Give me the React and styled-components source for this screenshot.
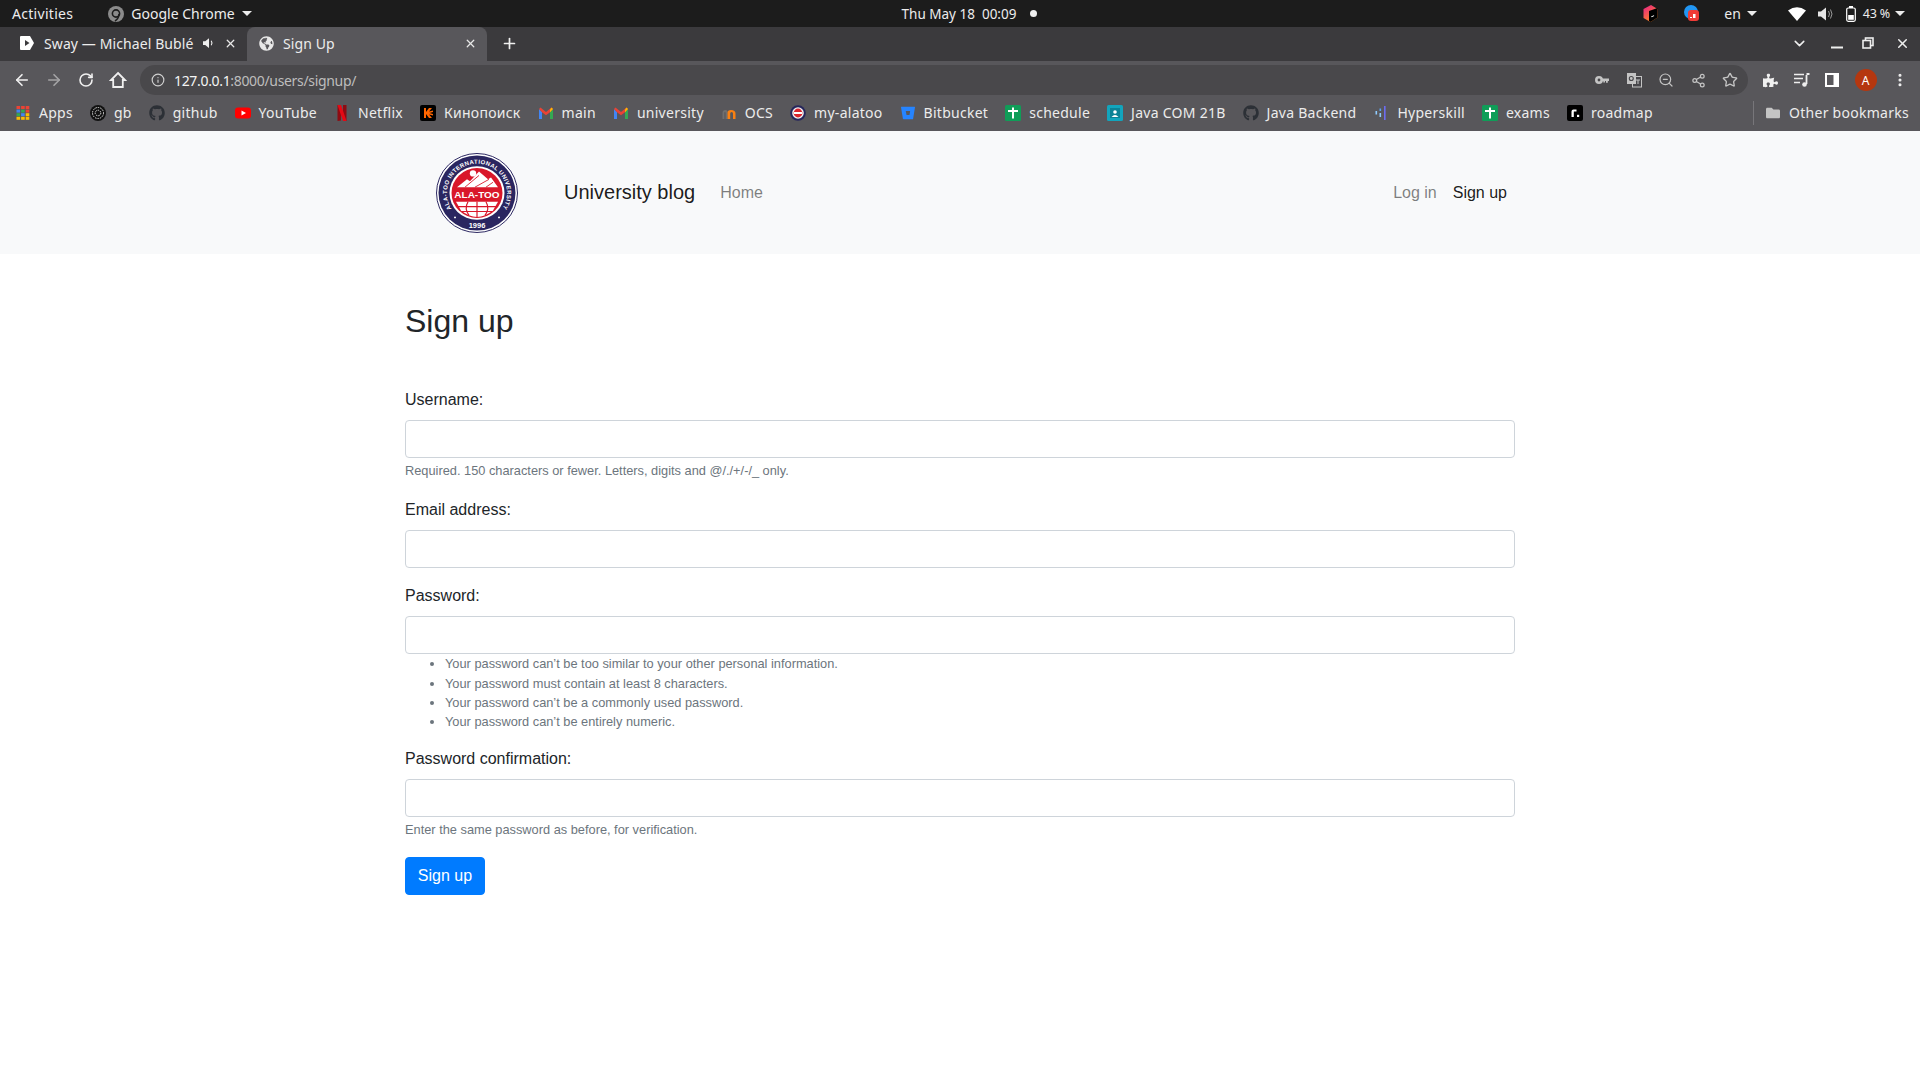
import React from "react";
import styled, { createGlobalStyle } from "styled-components";
import { ArrowLeft, ArrowRight, RotateCw, Info, ZoomOut, Share2, Star, X, Plus, ChevronDown, MoreVertical } from "lucide-react";
import { FaGithub, FaPuzzlePiece, FaFolder, FaGlobeAmericas } from "react-icons/fa";
import { SiBitbucket } from "react-icons/si";

const GlobalStyle = createGlobalStyle`
    * { box-sizing: border-box; }
    html, body { margin: 0; padding: 0; background: #fff; overflow: hidden; }
    body { font-family: "Liberation Sans", Arial, sans-serif; color: #212529; }
`;

const AppsIcon = () => {
    const colors = ["#ea4335", "#ea4335", "#ea4335", "#4285f4", "#34a853", "#ea4335", "#34a853", "#4285f4", "#fbbc04", "#fbbc04", "#fbbc04", "#fbbc04"];
    return (
        <svg width="16" height="16" viewBox="0 0 16 16">
            {colors.map((c, i) => (
                <rect key={i} x={1.5 + (i % 3) * 4.6} y={1 + Math.floor(i / 3) * 3.6} width="3.6" height="3" fill={c} />
            ))}
        </svg>
    );
};
const GbIcon = () => (
    <svg width="16" height="16" viewBox="0 0 16 16">
        <circle cx="8" cy="8" r="8" fill="#111" />
        <circle cx="8" cy="8" r="5.5" fill="none" stroke="#ddd" strokeWidth="1" strokeDasharray="1.5 1" />
        <circle cx="8" cy="8" r="2.8" fill="none" stroke="#ddd" strokeWidth="1" strokeDasharray="1.5 1" />
    </svg>
);
const YoutubeIcon = () => (
    <svg width="16" height="16" viewBox="0 0 16 16">
        <rect x="0" y="2.5" width="16" height="11" rx="3" fill="#f00" />
        <path d="M6.5 5.5 L11 8 L6.5 10.5 Z" fill="#fff" />
    </svg>
);
const NetflixIcon = () => (
    <svg width="16" height="16" viewBox="0 0 16 16">
        <path d="M3.5 0 H7 V15.5 L3.5 16 Z" fill="#8e0b12" />
        <path d="M9 0 H12.5 V16 L9 15.5 Z" fill="#8e0b12" />
        <path d="M3.5 0 H7 L12.5 16 H9 Z" fill="#e50914" />
    </svg>
);
const KinoIcon = () => (
    <svg width="16" height="16" viewBox="0 0 16 16">
        <rect width="16" height="16" rx="2" fill="#000" />
        <path d="M4 3 H6 V7 L9 3 H12 L9 6.5 L13 5.5 V7 L9.5 8 L13 9 V10.5 L9 9.5 L12 13 H9 L6 9 V13 H4 Z" fill="#f60" />
    </svg>
);
const GmailIcon = () => (
    <svg width="16" height="16" viewBox="0 0 16 16">
        <path d="M1 4 V14 H4 V7 Z" fill="#4285f4" />
        <path d="M15 4 V14 H12 V7 Z" fill="#34a853" />
        <path d="M1 4 L2.5 2.5 L8 7 L13.5 2.5 L15 4 L12 7.2 L8 10.2 L4 7.2 Z" fill="#ea4335" />
        <path d="M12 4.5 L13.5 2.5 L15 4 L12 7.2 Z" fill="#fbbc04" />
    </svg>
);
const MoodleIcon = () => (
    <svg width="16" height="16" viewBox="0 0 16 16">
        <path d="M1.5 14 V8 Q1.5 5 4.5 5 Q6.5 5 6.5 7 V14 H4.6 V8 Q4.6 7 3.8 7 Q3.4 7 3.4 8 V14 Z" fill="#6f6f6f" />
        <path d="M6.5 14 V7.5 Q6.5 5 10 5 Q14.5 5 14.5 8.5 V14 H12 V8.5 Q12 7 10.6 7 Q9.2 7 9.2 8.5 V14 Z" fill="#f98012" />
    </svg>
);
const AlatooSmallIcon = () => (
    <svg width="16" height="16" viewBox="0 0 16 16">
        <circle cx="8" cy="8" r="7.8" fill="#26265c" />
        <circle cx="8" cy="8" r="5.8" fill="#f2f2f2" />
        <circle cx="8" cy="8" r="4.4" fill="#d9232d" />
        <rect x="4" y="7" width="8" height="2" fill="#fff" />
    </svg>
);
const BitbucketIcon = () => <SiBitbucket size={14} color="#2684ff" />;
const SheetIcon = () => (
    <svg width="16" height="16" viewBox="0 0 16 16">
        <rect width="16" height="16" rx="1.5" fill="#0f9d58" />
        <rect x="3" y="5" width="10" height="2" fill="#fff" />
        <rect x="7" y="2.5" width="2" height="11" fill="#fff" />
    </svg>
);
const ClassroomIcon = () => (
    <svg width="16" height="16" viewBox="0 0 16 16">
        <rect width="16" height="16" rx="1.5" fill="#12a5bd" />
        <rect x="3" y="3" width="10" height="10" fill="#0c8296" />
        <circle cx="8" cy="7" r="1.8" fill="#fff" />
        <path d="M4.5 12 Q8 8 11.5 12 Z" fill="#fff" />
    </svg>
);
const HyperskillIcon = () => (
    <svg width="16" height="16" viewBox="0 0 16 16">
        <rect x="2.5" y="6" width="1.6" height="3.5" fill="#8ecbff" />
        <rect x="6.5" y="3.5" width="1.6" height="2.5" fill="#5aa5f5" />
        <rect x="6.5" y="8" width="1.6" height="4" fill="#8ecbff" />
        <rect x="11" y="1" width="1.6" height="14" fill="#6d6cf0" />
    </svg>
);
const RoadmapIcon = () => (
    <svg width="16" height="16" viewBox="0 0 16 16">
        <rect width="16" height="16" rx="2" fill="#000" />
        <path d="M4.5 12 V6.5 Q4.5 4.5 6.5 4.5 H9.5 V6.5 H7 Q6.8 6.5 6.8 7 V12 Z" fill="#fff" />
        <rect x="10" y="9.8" width="2.2" height="2.2" fill="#fff" />
    </svg>
);
const GithubIcon = () => <FaGithub size={16} color="#2c3036" />;

const bookmarks = [
    { name: "Apps", Icon: AppsIcon },
    { name: "gb", Icon: GbIcon },
    { name: "github", Icon: GithubIcon },
    { name: "YouTube", Icon: YoutubeIcon },
    { name: "Netflix", Icon: NetflixIcon },
    { name: "Кинопоиск", Icon: KinoIcon },
    { name: "main", Icon: GmailIcon },
    { name: "university", Icon: GmailIcon },
    { name: "OCS", Icon: MoodleIcon },
    { name: "my-alatoo", Icon: AlatooSmallIcon },
    { name: "Bitbucket", Icon: BitbucketIcon },
    { name: "schedule", Icon: SheetIcon },
    { name: "Java COM 21B", Icon: ClassroomIcon },
    { name: "Java Backend", Icon: GithubIcon },
    { name: "Hyperskill", Icon: HyperskillIcon },
    { name: "exams", Icon: SheetIcon },
    { name: "roadmap", Icon: RoadmapIcon },
];

const passwordRules = [
    "Your password can’t be too similar to your other personal information.",
    "Your password must contain at least 8 characters.",
    "Your password can’t be a commonly used password.",
    "Your password can’t be entirely numeric.",
];

const Logo = () => (
    <svg width="82" height="80" viewBox="0 0 82 82" preserveAspectRatio="none">
        <defs>
            <path id="logoArc" d="M15.6 57 A30 30 0 1 1 66.4 57" />
        </defs>
        <circle cx="41" cy="41" r="40.5" fill="#fff" stroke="#2a2660" strokeWidth="1" />
        <circle cx="41" cy="41" r="38.5" fill="#2a2660" />
        <circle cx="41" cy="41" r="27.5" fill="#fff" />
        <circle cx="41" cy="41" r="25.5" fill="#d9172a" />
        <text fontFamily="Liberation Sans" fontSize="6" fontWeight="700" fill="#fff" letterSpacing=".38">
            <textPath href="#logoArc">ALA-TOO INTERNATIONAL UNIVERSITY</textPath>
        </text>
        <text x="41" y="77" textAnchor="middle" fontFamily="Liberation Sans" fontSize="7.5" fontWeight="700" fill="#fff">1996</text>
        <circle cx="19" cy="66" r="1" fill="#fff" />
        <circle cx="63" cy="66" r="1" fill="#fff" />
        <circle cx="37" cy="21" r="3.2" fill="#fff" />
        <path d="M21 35 L31 27 L34 29 L43 19 L52 27 L55 25 L62 35 Z" fill="#fff" />
        <path d="M29 35 L43 23 M39 35 L53 27 M50 35 L57 30" stroke="#d9172a" strokeWidth="0.9" fill="none" />
        <text x="41" y="46" textAnchor="middle" fontFamily="Liberation Sans" fontSize="10" fontWeight="700" fill="#fff">ALA-TOO</text>
        <path d="M20 50 H62 L57 59 Q49 65.5 41 65.5 Q33 65.5 25 59 Z" fill="#fff" />
        <path d="M41 50 V66 M32 50 Q28 57 33 64 M50 50 Q54 57 49 64 M22 55 H60 M26 60 H56" stroke="#d9172a" strokeWidth="1.2" fill="none" />
    </svg>
);

const BrowserChrome = () => (
    <ChromeWrap>
        <SystemBar>
            <SystemLeft>
                <ActivitiesLabel>Activities</ActivitiesLabel>
                <AppMenu>
                    <svg width="16" height="16" viewBox="0 0 16 16">
                        <circle cx="8" cy="8" r="8" fill="#8b8b8b" />
                        <circle cx="8" cy="7.5" r="3.6" fill="none" stroke="#1c1c1c" strokeWidth="1.6" />
                        <path d="M11 8 Q10.5 13 7 15" stroke="#1c1c1c" strokeWidth="1.6" fill="none" />
                    </svg>
                    <span>Google Chrome</span>
                    <Caret />
                </AppMenu>
            </SystemLeft>
            <Clock>
                <span>Thu May 18&nbsp;&nbsp;00:09</span>
                <ClockDot />
            </Clock>
            <SystemRight>
                <svg width="15" height="17" viewBox="0 0 15 17">
                    <defs>
                        <linearGradient id="toolboxFill" x1="0" y1="0" x2="0.6" y2="1">
                            <stop offset="0" stopColor="#e91e8c" />
                            <stop offset="1" stopColor="#ff8a1e" />
                        </linearGradient>
                    </defs>
                    <path d="M0.5 4 L8 0 L14.5 4 V12.5 L7.5 17 L0.5 13 Z" fill="url(#toolboxFill)" />
                    <path d="M6 6 L14.5 3 V12.5 L7.5 17 L6 16 Z" fill="#000" />
                    <rect x="8" y="11" width="3" height="1" fill="#fff" transform="rotate(-25 9 11)" />
                </svg>
                <TrayBadge>
                    <svg width="15" height="17" viewBox="0 0 15 17">
                        <circle cx="7" cy="7" r="7" fill="#2196f3" />
                        <rect x="4" y="5" width="11" height="11" rx="3" fill="#ef3b36" />
                        <rect x="6" y="12" width="2" height="1" fill="#fff" />
                        <rect x="9" y="9" width="2.5" height="4" fill="#fff" />
                    </svg>
                </TrayBadge>
                <LangMenu>
                    <span>en</span>
                    <Caret />
                </LangMenu>
                <TrayIcons>
                    <svg width="18" height="14" viewBox="0 0 18 14">
                        <path d="M0 3.5 Q9 -3 18 3.5 L9 14 Z" fill="#fff" />
                    </svg>
                    <svg width="16" height="14" viewBox="0 0 16 14">
                        <path d="M0 4.5 H3 L8 0.5 V13.5 L3 9.5 H0 Z" fill="#e6e6e6" />
                        <path d="M10.5 4 Q12.5 7 10.5 10 M12.5 2.5 Q15.5 7 12.5 11.5" stroke="#999" fill="none" />
                    </svg>
                    <svg width="10" height="16" viewBox="0 0 10 16">
                        <rect x="0.7" y="2" width="8.6" height="13.3" rx="1.5" fill="none" stroke="#fff" strokeWidth="1.2" />
                        <rect x="3" y="0" width="4" height="2" fill="#fff" />
                        <rect x="2.2" y="9" width="5.6" height="4.8" fill="#fff" />
                    </svg>
                </TrayIcons>
                <BatteryText>
                    <span>43 %</span>
                    <Caret />
                </BatteryText>
            </SystemRight>
        </SystemBar>

        <TabStrip>
            <Tab $first>
                <svg width="16" height="16" viewBox="0 0 16 16">
                    <path d="M2 1 H11 L15 8 L11 15 H2 Q1 15 1 14 V2 Q1 1 2 1 Z" fill="#fff" />
                    <path d="M6 5 L10.5 8 L6 11 Z" fill="#3b3a3d" />
                </svg>
                <TabTitle>Sway — Michael Bublé</TabTitle>
                <svg width="12" height="12" viewBox="0 0 16 14">
                    <path d="M0 4.5 H3 L8 0.5 V13.5 L3 9.5 H0 Z" fill="#eee" />
                    <path d="M11 4 Q13 7 11 10" stroke="#eee" strokeWidth="1.5" fill="none" />
                </svg>
                <TabClose><X size={13} strokeWidth={2.4} /></TabClose>
            </Tab>
            <Tab $active>
                <FaGlobeAmericas size={15} color="#e8e8e8" />
                <TabTitle>Sign Up</TabTitle>
                <TabClose><X size={13} strokeWidth={2.4} /></TabClose>
            </Tab>
            <NewTab><Plus size={17} strokeWidth={2.4} /></NewTab>
            <WindowControls>
                <ChevronDown size={17} strokeWidth={2.2} />
                <WindowButtons>
                    <WindowSlot $w={30}>
                        <svg width="12" height="12" viewBox="0 0 12 12">
                            <rect x="0" y="9.5" width="12" height="2" fill="#eee" />
                        </svg>
                    </WindowSlot>
                    <WindowSlot $w={32}>
                        <svg width="12" height="12" viewBox="0 0 12 12">
                            <rect x="3.5" y="1" width="7.5" height="7.5" fill="none" stroke="#eee" strokeWidth="1.6" />
                            <rect x="1" y="3.5" width="7.5" height="7.5" fill="#3b3a3d" stroke="#eee" strokeWidth="1.6" />
                        </svg>
                    </WindowSlot>
                    <WindowSlot $w={36}><X size={15} strokeWidth={2.4} /></WindowSlot>
                </WindowButtons>
            </WindowControls>
        </TabStrip>

        <Toolbar>
            <NavButtons>
                <NavSlot><ArrowLeft size={18} strokeWidth={2.2} /></NavSlot>
                <NavSlot $dim><ArrowRight size={18} strokeWidth={2.2} /></NavSlot>
                <NavSlot><RotateCw size={16} strokeWidth={2.4} /></NavSlot>
                <NavSlot>
                    <svg width="18" height="18" viewBox="0 0 18 18">
                        <path d="M9 2 L16 9 H13.8 V16 H4.2 V9 H2 Z" fill="none" stroke="#f0f0f0" strokeWidth="1.8" strokeLinejoin="miter" />
                    </svg>
                </NavSlot>
            </NavButtons>
            <Omnibox>
                <InfoWrap><Info size={14} strokeWidth={2} /></InfoWrap>
                <Url>127.0.0.1<UrlRest>:8000/users/signup/</UrlRest></Url>
                <OmniIcons>
                    <OmniSlot>
                        <svg width="14" height="8" viewBox="0 0 14 8">
                            <path d="M4 0 A4 4 0 1 1 4 8 A4 4 0 1 1 4 0 Z M4 2.6 A1.4 1.4 0 1 0 4 5.4 A1.4 1.4 0 1 0 4 2.6 Z" fill="#c4c4c4" fillRule="evenodd" />
                            <path d="M7 2.4 H14 V5 H12.8 V6.8 H11 V5 H10 V6.4 H8.3 V5 H7 Z" fill="#c4c4c4" />
                        </svg>
                    </OmniSlot>
                    <OmniSlot>
                        <svg width="16" height="16" viewBox="0 0 16 16">
                            <rect x="6.5" y="4.5" width="9" height="10.5" fill="#47464a" stroke="#c4c4c4" />
                            <rect x="1" y="1" width="9" height="11" fill="#c4c4c4" />
                            <circle cx="5.3" cy="6.5" r="2" fill="none" stroke="#47464a" strokeWidth="1.1" />
                            <path d="M10 8 H14 M12 8 V12" stroke="#c4c4c4" strokeWidth="1" />
                        </svg>
                    </OmniSlot>
                    <OmniSlot><ZoomOut size={16} strokeWidth={1.8} /></OmniSlot>
                    <OmniSlot><Share2 size={15} strokeWidth={2} /></OmniSlot>
                    <OmniSlot><Star size={16} strokeWidth={2} /></OmniSlot>
                </OmniIcons>
            </Omnibox>
            <ExtensionIcons>
                <FaPuzzlePiece size={15} />
                <svg width="16" height="14" viewBox="0 0 16 14">
                    <path d="M0 1.5 H10 M0 5.5 H9 M0 9.5 H6" stroke="#eee" strokeWidth="1.6" />
                    <path d="M12.5 2 V11 M12.5 1 H15.5" stroke="#eee" strokeWidth="1.8" fill="none" />
                    <circle cx="10.5" cy="11.5" r="2.3" fill="#eee" />
                </svg>
                <svg width="14" height="14" viewBox="0 0 14 14">
                    <rect x="1" y="1" width="12" height="12" fill="none" stroke="#fff" strokeWidth="2" />
                    <rect x="8.5" y="1" width="4.5" height="12" fill="#fff" />
                </svg>
                <Avatar>A</Avatar>
                <MoreVertical size={16} strokeWidth={2.6} />
            </ExtensionIcons>
        </Toolbar>

        <BookmarksBar>
            <BookmarkList>
                {bookmarks.map(({ name, Icon }) => (
                    <Bookmark key={name}>
                        <BookmarkIcon><Icon /></BookmarkIcon>
                        <span>{name}</span>
                    </Bookmark>
                ))}
            </BookmarkList>
            <OtherBookmarks>
                <FaFolder size={14} color="#c4c4c4" />
                <span>Other bookmarks</span>
            </OtherBookmarks>
        </BookmarksBar>
    </ChromeWrap>
);

export default function App() {
    return (
        <>
            <GlobalStyle />
            <BrowserChrome />
            <Navbar>
                <NavInner>
                    <Brand>
                        <Logo />
                        <BrandText>University blog</BrandText>
                    </Brand>
                    <NavLink>Home</NavLink>
                    <NavRight>
                        <NavLink>Log in</NavLink>
                        <NavLink $active>Sign up</NavLink>
                    </NavRight>
                </NavInner>
            </Navbar>
            <Main>
                <Heading>Sign up</Heading>
                <form onSubmit={(e) => e.preventDefault()}>
                    <FormGroup>
                        <Label>Username:</Label>
                        <Input type="text" />
                        <HelpText>Required. 150 characters or fewer. Letters, digits and @/./+/-/_ only.</HelpText>
                    </FormGroup>
                    <FormGroup>
                        <Label>Email address:</Label>
                        <Input type="email" />
                    </FormGroup>
                    <FormGroup>
                        <Label>Password:</Label>
                        <Input type="password" />
                        <RuleList>
                            {passwordRules.map((rule) => (
                                <li key={rule}>{rule}</li>
                            ))}
                        </RuleList>
                    </FormGroup>
                    <FormGroup>
                        <Label>Password confirmation:</Label>
                        <Input type="password" />
                        <HelpText>Enter the same password as before, for verification.</HelpText>
                    </FormGroup>
                    <SubmitButton type="submit">Sign up</SubmitButton>
                </form>
            </Main>
        </>
    );
}

const ChromeWrap = styled.div`
    font-family: "Noto Sans", sans-serif;
    color: #e8e8e8;
`;
const SystemBar = styled.div`
    height: 27px;
    background: #1c1c1c;
    display: grid;
    grid-template-columns: 1fr auto 1fr;
    align-items: center;
    font-size: 14px;
    color: #ececec;
    padding: 0 15px 0 12px;
`;
const SystemLeft = styled.div`
    display: flex;
    align-items: center;
    gap: 35px;
`;
const ActivitiesLabel = styled.span`
    letter-spacing: 0.3px;
`;
const AppMenu = styled.div`
    display: flex;
    align-items: center;
    gap: 7px;
`;
const Caret = styled.span`
    width: 0;
    height: 0;
    border-left: 5px solid transparent;
    border-right: 5px solid transparent;
    border-top: 5px solid #ececec;
    display: inline-block;
`;
const Clock = styled.div`
    display: flex;
    align-items: center;
    gap: 14px;
    padding-left: 22px;
    font-size: 13.5px;
`;
const ClockDot = styled.span`
    width: 7px;
    height: 7px;
    border-radius: 50%;
    background: #f0f0f0;
`;
const SystemRight = styled.div`
    display: flex;
    align-items: center;
    justify-content: flex-end;
`;
const TrayBadge = styled.div`
    display: flex;
    margin-left: 26px;
`;
const LangMenu = styled.div`
    display: flex;
    align-items: center;
    gap: 6px;
    margin-left: 25px;
`;
const TrayIcons = styled.div`
    display: flex;
    align-items: center;
    gap: 12px;
    margin-left: 31px;
`;
const BatteryText = styled.div`
    display: flex;
    align-items: center;
    gap: 5px;
    margin-left: 7px;
    font-size: 12.5px;
    letter-spacing: -0.2px;
`;
const TabStrip = styled.div`
    height: 34px;
    background: #3b3a3d;
    display: flex;
`;
const Tab = styled.div`
    width: ${(p) => (p.$first ? "247px" : "240px")};
    display: flex;
    align-items: center;
    gap: 9px;
    padding: 0 10px 2px ${(p) => (p.$first ? "19px" : "12px")};
    background: ${(p) => (p.$active ? "#58575b" : "transparent")};
    border-radius: 8px 8px 0 0;
    font-size: 14px;
    color: #ececec;
`;
const TabTitle = styled.span`
    flex: 1;
    min-width: 0;
    white-space: nowrap;
    letter-spacing: 0.1px;
`;
const TabClose = styled.span`
    display: flex;
    color: #e8e8e8;
`;
const NewTab = styled.div`
    width: 44px;
    padding-bottom: 2px;
    display: flex;
    align-items: center;
    justify-content: center;
    color: #f0f0f0;
`;
const WindowControls = styled.div`
    margin-left: auto;
    padding-bottom: 2px;
    display: flex;
    align-items: center;
    color: #eee;
`;
const WindowButtons = styled.div`
    display: flex;
    align-items: center;
    margin-left: 14px;
`;
const WindowSlot = styled.span`
    width: ${(p) => p.$w}px;
    display: flex;
    justify-content: center;
`;
const Toolbar = styled.div`
    height: 34px;
    background: #58575b;
    display: flex;
    align-items: flex-end;
    color: #f0f0f0;
`;
const NavButtons = styled.div`
    width: 140px;
    height: 30px;
    display: flex;
    align-items: center;
    padding-left: 6px;
`;
const NavSlot = styled.span`
    width: 32px;
    display: flex;
    justify-content: center;
    opacity: ${(p) => (p.$dim ? 0.5 : 1)};
`;
const Omnibox = styled.div`
    width: 1608px;
    height: 30px;
    background: #49484b;
    border-radius: 15px;
    display: flex;
    align-items: center;
    padding: 0 10px 0 11px;
    font-size: 14px;
`;
const InfoWrap = styled.span`
    display: flex;
    color: #d0d0d0;
    margin-right: 9px;
`;
const Url = styled.span`
    color: #f4f4f4;
    letter-spacing: -0.33px;
`;
const UrlRest = styled.span`
    color: #bdbdbd;
`;
const OmniIcons = styled.div`
    margin-left: auto;
    display: flex;
    align-items: center;
    gap: 16px;
    color: #c4c4c4;
`;
const OmniSlot = styled.span`
    width: 16px;
    display: flex;
    justify-content: center;
`;
const ExtensionIcons = styled.div`
    flex: 1;
    height: 30px;
    display: flex;
    align-items: center;
    justify-content: space-between;
    padding: 0 12px 0 15px;
    color: #f0f0f0;
`;
const Avatar = styled.div`
    width: 22px;
    height: 22px;
    border-radius: 50%;
    background: #b5370f;
    color: #fff;
    font-size: 12px;
    display: flex;
    align-items: center;
    justify-content: center;
`;
const BookmarksBar = styled.div`
    height: 36px;
    background: #58575b;
    display: flex;
    align-items: center;
    justify-content: space-between;
    padding: 0 11px 1px 15px;
    font-size: 14px;
    color: #ececec;
    letter-spacing: 0.27px;
`;
const BookmarkList = styled.div`
    display: flex;
    align-items: center;
    gap: 17px;
`;
const Bookmark = styled.div`
    display: flex;
    align-items: center;
    gap: 8px;
    white-space: nowrap;
`;
const BookmarkIcon = styled.span`
    width: 16px;
    height: 16px;
    display: flex;
    align-items: center;
    justify-content: center;
`;
const OtherBookmarks = styled.div`
    display: flex;
    align-items: center;
    gap: 9px;
    padding-left: 12px;
    border-left: 1px solid #77767a;
    height: 24px;
`;
const Navbar = styled.nav`
    height: 123px;
    background: #f8f9fa;
`;
const NavInner = styled.div`
    width: 1110px;
    height: 100%;
    margin: 0 auto;
    display: flex;
    align-items: center;
`;
const Brand = styled.div`
    display: flex;
    align-items: center;
    gap: 46px;
    margin-left: 31px;
    margin-right: 17px;
`;
const BrandText = styled.span`
    font-size: 20px;
    color: rgba(0, 0, 0, 0.9);
`;
const NavLink = styled.a`
    font-size: 16px;
    padding: 8px;
    color: ${(p) => (p.$active ? "rgba(0, 0, 0, 0.9)" : "rgba(0, 0, 0, 0.5)")};
`;
const NavRight = styled.div`
    margin-left: auto;
    display: flex;
`;
const Main = styled.main`
    width: 1110px;
    margin: 0 auto;
    padding-top: 48px;
`;
const Heading = styled.h1`
    font-size: 32px;
    font-weight: 500;
    line-height: 1.2;
    margin: 0 0 48px;
`;
const FormGroup = styled.div`
    margin-bottom: 16px;
`;
const Label = styled.label`
    display: block;
    font-size: 16px;
    line-height: 24px;
    margin-bottom: 8px;
`;
const Input = styled.input`
    display: block;
    width: 100%;
    height: 38px;
    padding: 6px 12px;
    font-size: 16px;
    background: #fff;
    border: 1px solid #ced4da;
    border-radius: 4px;
    outline: none;
`;
const HelpText = styled.small`
    display: block;
    margin-top: 3px;
    padding-bottom: 1px;
    font-size: 12.8px;
    line-height: 19.2px;
    color: #6c757d;
`;
const RuleList = styled.ul`
    margin: 0;
    padding-left: 40px;
    font-size: 12.8px;
    line-height: 19.2px;
    color: #6c757d;
    li:first-child {
        margin-bottom: 1px;
    }
`;
const SubmitButton = styled.button`
    width: 80px;
    height: 38px;
    padding: 0;
    font-family: "Liberation Sans", Arial, sans-serif;
    font-size: 16px;
    color: #fff;
    background: #007bff;
    border: 1px solid #007bff;
    border-radius: 4px;
`;
